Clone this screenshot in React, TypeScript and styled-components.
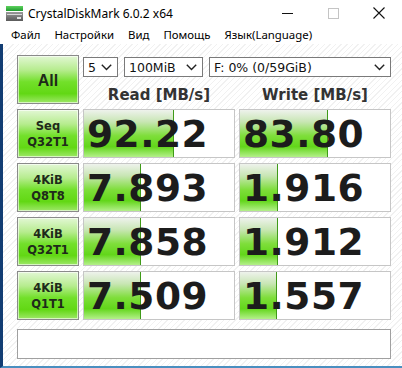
import React from "react";
import styled, { createGlobalStyle } from "styled-components";

const GlobalStyle = createGlobalStyle`
  body {
    margin: 0;
    overflow: hidden;
    background: #ffffff;
  }
`;

type Row = {
  top: string;
  bottom: string;
  read: string;
  write: string;
  readFill: number;
  writeFill: number;
};

const rows: Row[] = [
  { top: "Seq", bottom: "Q32T1", read: "92.22", write: "83.80", readFill: 89, writeFill: 87 },
  { top: "4KiB", bottom: "Q8T8", read: "7.893", write: "1.916", readFill: 56, writeFill: 37 },
  { top: "4KiB", bottom: "Q32T1", read: "7.858", write: "1.912", readFill: 56, writeFill: 37 },
  { top: "4KiB", bottom: "Q1T1", read: "7.509", write: "1.557", readFill: 56, writeFill: 36 },
];

const menu = ["Файл", "Настройки", "Вид", "Помощь", "Язык(Language)"];

const Chevron = () => (
  <svg width="11" height="7" viewBox="0 0 11 7">
    <path d="M0.8 0.8 L5.5 5.5 L10.2 0.8" fill="none" stroke="#222" strokeWidth="1.4" />
  </svg>
);

const AppIcon = () => (
  <svg width="17" height="15" viewBox="0 0 17 15">
    <defs>
      <linearGradient id="g" x1="0" y1="0" x2="0" y2="1">
        <stop offset="0" stopColor="#5fd35f" />
        <stop offset="1" stopColor="#1f9a2e" />
      </linearGradient>
      <linearGradient id="d" x1="0" y1="0" x2="0" y2="1">
        <stop offset="0" stopColor="#9a9a9a" />
        <stop offset="1" stopColor="#5a5a5a" />
      </linearGradient>
    </defs>
    <rect x="0" y="0" width="17" height="5" fill="url(#g)" />
    <rect x="0" y="6" width="17" height="9" fill="url(#d)" />
    <rect x="1" y="8" width="15" height="1" fill="#d8d8d8" />
    <rect x="11" y="11" width="4" height="2" fill="#e0e0e0" />
  </svg>
);

const App = () => {
  return (
    <Window>
      <GlobalStyle />
      <TitleBar>
        <TitleIcon>
          <AppIcon />
        </TitleIcon>
        <TitleText>CrystalDiskMark 6.0.2 x64</TitleText>
        <Controls>
          <CtrlBtn>
            <svg width="11" height="11" viewBox="0 0 11 11">
              <path d="M0 5.5 H11" stroke="#111" strokeWidth="1" />
            </svg>
          </CtrlBtn>
          <CtrlBtn>
            <svg width="11" height="11" viewBox="0 0 11 11">
              <rect x="0.5" y="0.5" width="10" height="10" fill="none" stroke="#c4c4c4" strokeWidth="1" />
            </svg>
          </CtrlBtn>
          <CtrlBtn>
            <svg width="12" height="12" viewBox="0 0 12 12">
              <path d="M0.5 0.5 L11.5 11.5 M11.5 0.5 L0.5 11.5" stroke="#111" strokeWidth="1.1" />
            </svg>
          </CtrlBtn>
        </Controls>
      </TitleBar>
      <MenuBar>
        {menu.map((m) => (
          <MenuItem key={m}>{m}</MenuItem>
        ))}
      </MenuBar>
      <Body>
        <Grid>
          <TestButton $big>All</TestButton>
          <TopCell>
            <SelectRow>
              <Select $w={35}>
                <span>5</span>
                <Chevron />
              </Select>
              <Select $w={79}>
                <span>100MiB</span>
                <Chevron />
              </Select>
              <Select $w={182}>
                <span>F: 0% (0/59GiB)</span>
                <Chevron />
              </Select>
            </SelectRow>
            <Headers>
              <Header>Read [MB/s]</Header>
              <Header>Write [MB/s]</Header>
            </Headers>
          </TopCell>
          {rows.map((r) => (
            <React.Fragment key={r.top + r.bottom}>
              <TestButton>
                <span>{r.top}</span>
                <span>{r.bottom}</span>
              </TestButton>
              <Meter>
                <Fill style={{ width: r.readFill }} />
                <Value>{r.read}</Value>
              </Meter>
              <Meter>
                <Fill style={{ width: r.writeFill }} />
                <Value>{r.write}</Value>
              </Meter>
            </React.Fragment>
          ))}
        </Grid>
        <Status />
      </Body>
    </Window>
  );
};

export default App;

const Window = styled.div`
  width: 402px;
  height: 368px;
  display: flex;
  flex-direction: column;
  background: #ffffff;
  font-family: "DejaVu Sans", Verdana, sans-serif;
  overflow: hidden;
`;

const TitleBar = styled.div`
  height: 26px;
  display: flex;
  align-items: center;
  background: #ffffff;
`;

const TitleIcon = styled.div`
  width: 17px;
  height: 15px;
  margin-left: 6px;
  margin-top: 1px;
  display: flex;
`;

const TitleText = styled.div`
  margin-left: 5px;
  font-family: "Noto Sans", "Open Sans", sans-serif;
  font-size: 12px;
  color: #000;
  flex: 1;
`;

const Controls = styled.div`
  display: flex;
  height: 26px;
`;

const CtrlBtn = styled.div`
  width: 46px;
  display: flex;
  align-items: center;
  justify-content: center;
`;

const MenuBar = styled.div`
  height: 18px;
  display: flex;
  align-items: center;
  padding-left: 4px;
  background: #ffffff;
`;

const MenuItem = styled.div`
  padding: 0 7px;
  font-family: "Noto Sans", "Open Sans", sans-serif;
  font-size: 11.4px;
  color: #000;
  line-height: 18px;
`;

const Body = styled.div`
  flex: 1;
  border-left: 3px solid #123d73;
  border-bottom: 2px solid #4a8fc0;
  padding: 11px 0 0 14px;
  background: repeating-linear-gradient(
    135deg,
    #ffffff 0px,
    #ffffff 3px,
    #f1f1f1 3px,
    #f1f1f1 4px
  );
`;

const Grid = styled.div`
  display: grid;
  grid-template-columns: 62px 152px 152px;
  grid-auto-rows: 49px;
  column-gap: 4px;
  row-gap: 5px;
`;

const TestButton = styled.div<{ $big?: boolean }>`
  box-sizing: border-box;
  border: 1px solid #8a8a8a;
  box-shadow: inset 0 0 0 1px rgba(255, 255, 255, 0.6);
  background: linear-gradient(
    to bottom,
    #e2f7d4 0%,
    #b6ec8e 30%,
    #72e02a 55%,
    #62d814 80%,
    #9ee868 100%
  );
  display: flex;
  flex-direction: column;
  align-items: center;
  justify-content: center;
  color: #1e2a1a;
  font-weight: bold;
  font-size: ${(p) => (p.$big ? "16px" : "11.5px")};
  font-family: ${(p) =>
    p.$big ? '"Liberation Sans", Arial, sans-serif' : '"DejaVu Sans", Verdana, sans-serif'};
  line-height: 16px;
  padding-top: ${(p) => (p.$big ? "3px" : "0")};
`;

const TopCell = styled.div`
  grid-column: 2 / 4;
  display: flex;
  flex-direction: column;
`;

const SelectRow = styled.div`
  display: flex;
  gap: 6px;
  margin-top: 2px;
`;

const Select = styled.div<{ $w: number }>`
  box-sizing: border-box;
  width: ${(p) => p.$w}px;
  height: 20px;
  border: 1px solid #7a7a7a;
  background: #ffffff;
  display: flex;
  align-items: center;
  justify-content: space-between;
  padding: 0 5px 0 4px;
  font-size: 12.5px;
  color: #111;
`;

const Headers = styled.div`
  display: grid;
  grid-template-columns: 152px 152px;
  column-gap: 4px;
  margin-top: 9px;
`;

const Header = styled.div`
  text-align: center;
  font-size: 15px;
  font-weight: bold;
  line-height: 18px;
  color: #333;
`;

const Meter = styled.div`
  position: relative;
  box-sizing: border-box;
  border: 1px solid #c6c6c6;
  background: #ffffff;
  display: flex;
  align-items: center;
  overflow: hidden;
`;

const Fill = styled.div`
  position: absolute;
  left: 0;
  top: 0;
  bottom: 0;
  border-right: 1px solid #3f9a18;
  background: linear-gradient(
    to bottom,
    #eef2ec 0%,
    #c8e6b4 25%,
    #7ede3a 55%,
    #62d61a 78%,
    #b4f08a 100%
  );
`;

const Value = styled.div`
  position: relative;
  padding-left: 3px;
  font-size: 37.5px;
  font-weight: bold;
  letter-spacing: 0.5px;
  color: #1c1c1c;
  line-height: 40px;
`;

const Status = styled.div`
  box-sizing: border-box;
  width: 374px;
  height: 30px;
  margin-top: 9px;
  border: 1px solid #a0a0a0;
  background: #ffffff;
`;
